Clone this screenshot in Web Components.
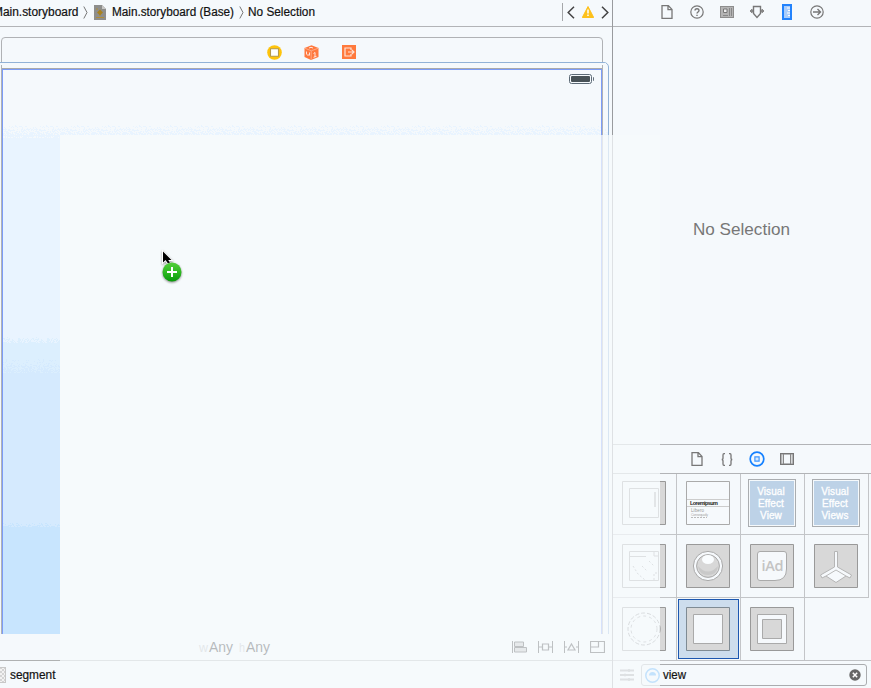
<!DOCTYPE html>
<html lang="en"><head><meta charset="utf-8"><title>Main.storyboard</title>
<style>
body{margin:0;background:#f5f9fc;font:13px "Liberation Sans",Arial,sans-serif;color:#111;overflow:hidden}
</style></head><body>
<xc-window></xc-window>
<script>
function define(name, css, html, after){
  const t=document.createElement('template');
  t.innerHTML='<style>*{box-sizing:border-box}svg{display:block;flex:none;overflow:visible}'+css+'</style>'+html;
  customElements.define(name,class extends HTMLElement{
    constructor(){super();this.attachShadow({mode:'open'}).append(t.content.cloneNode(true));}
    connectedCallback(){if(after)after(this);}
  });
}
const tile='<path d="M.5.5h43v43H.5z" fill="#d8d8d8" stroke="#999"/>';
const ghost='<path d="M38 .5h5.500v43H38z" fill="#d8d8d8"/><path d="M.5.5h43v43H.5z" fill="none" stroke="#999"/>';
const icons={
doc:[12,14,'<path d="M1 .7h6.4l3.6 3.7v8.9H1z M7 .7v4h4" fill="none" stroke="#777" stroke-width="1.3"/>'],
help:[14,14,'<circle cx="7" cy="7" r="6.2" fill="none" stroke="#777" stroke-width="1.2"/><path d="M5 5.6C5 3 9 3.100 9 5.500C9 7 7 7 7 8.600M7 9.700v1.300" fill="none" stroke="#777" stroke-width="1.4"/>'],
identity:[14,12,'<path d="M0 0h14v12H0z" fill="#8d8d8d"/><path d="M1 1h12v10H1z" fill="#b4b4b4"/><path d="M3.500 3h3.500v3.500H3.500z" fill="#eee" stroke="#777"/><path d="M9.500 2v8M11.500 2v8M3 9.500h5" stroke="#888"/>'],
attributes:[14,14,'<path d="M3.500 1.500h7v7L7 12.500 3.500 8.500z" fill="none" stroke="#777" stroke-width="1.400"/><path d="M0 6h3M11 6h3" stroke="#888" stroke-width="2"/><path d="M1.800 4v4M12.200 4v4" stroke="#888" stroke-width="1.500"/>'],
ruler:[10,16,'<path d="M1 1h8v14H1z" fill="#a9cdfb" stroke="#2383fc" stroke-width="2"/><path d="M5 4h3M6 6.500h2M5 9h3M6 11.500h2" stroke="#fff" stroke-width="1.100"/>'],
arrow:[14,14,'<circle cx="7" cy="7" r="6.200" fill="none" stroke="#777" stroke-width="1.200"/><path d="M3 7h7M7.500 4l3 3-3 3" fill="none" stroke="#777" stroke-width="1.400"/>'],
braces:[12,13,'<path d="M4 .7H3Q2 .7 2 2v3Q2 6.500.7 6.500 2 6.500 2 8v3Q2 12.300 3 12.300h1M8 .7h1Q10 .7 10 2v3Q10 6.500 11.300 6.500 10 6.500 10 8v3Q10 12.300 9 12.300H8" fill="none" stroke="#777" stroke-width="1.300"/>'],
object:[16,16,'<circle cx="8" cy="8" r="6.800" fill="none" stroke="#1581ff" stroke-width="1.700"/><path d="M5.900 5.900h4.200v4.200H5.900z" fill="#d5e9ff" stroke="#3f97ff" stroke-width="1.200"/>'],
media:[14,12,'<path d="M.75.75h12.500v10.500H.75z" fill="none" stroke="#777" stroke-width="1.500"/><path d="M3.500 1v10M10.500 1v10" stroke="#888"/><path d="M2 1v10M12 1v10" stroke="#b5b5b5"/>'],
file:[12,15,'<path d="M0 0h8L12 4v11H0z" fill="#8e8e8c"/><path d="M8 0v4H12z" fill="#c9c8c5"/><path d="M2 4h2M2 12.500h8M6 5v6" stroke="#b08d38"/><path d="m6 4.500 3 3-3 3-3-3z" fill="#a98220"/>'],
chev:[5,13,'<path d="m.8.500 3.200 6-3.200 6" fill="none" stroke="#777" stroke-width="1"/>'],
left:[8,13,'<path d="M7 .8 1.200 6.500 7 12.200" fill="none" stroke="#444" stroke-width="1.500"/>'],
right:[8,13,'<path d="m1 .8 5.800 5.700L1 12.200" fill="none" stroke="#444" stroke-width="1.500"/>'],
warn:[12,12,'<path d="M6 .5 11.700 11.500H.3z" fill="#fdc11c" stroke="#fdc11c" stroke-linejoin="round"/><path d="M6 3.500v4M6 8.500v1.500" stroke="#fff" stroke-width="1.500"/>'],
vc:[15,15,'<circle cx="7.500" cy="7.500" r="7.300" fill="#ffc40b"/><path d="M3.500 3.800h8v7.400h-8z" fill="#fff" stroke="#b59a4a" stroke-width="1.100"/>'],
cube:[15,15,'<path d="M7.500.2 14.500 3v9L7 15 .5 12V3z" fill="#ff793e"/><path d="m.8 3.200 6.500 2.600L14.300 3.200M7.200 6v8.500" fill="none" stroke="#ffb593" stroke-width=".8"/><path d="M9.500 8.500 11 7.500v4.500M9.500 12.300l3-1M2.500 6.500v3M4 9v2M5.500 7.500v3M5 3l2-.7 2 .7" fill="none" stroke="#ffe5da" stroke-width="1"/>'],
exit:[14,14,'<path d="M0 0h14v14H0z" fill="#ff7a3d"/><path d="M9 5V3H3v8h6V9M6 7h6M9.800 4.800 12 7 9.800 9.200" fill="none" stroke="#ffe4d8" stroke-width="1.200"/>'],
align:[15,12,'<path d="M.5 0v12" stroke="#222"/><path d="M2.500 1h9v4.500h-9zM2.500 6.500h12v4.500h-12z" fill="#bbb" stroke="#222"/>'],
pin:[15,12,'<path d="M.5 0v12M14.500 0v12M1 6h3M11 6h3" stroke="#222"/><path d="M4.500 3h6v6h-6z" fill="none" stroke="#222" stroke-width="1.200"/>'],
resolve:[15,12,'<path d="M.5 0v12M14.500 0v12M1 6h2M12 6h2" stroke="#222"/><path d="M7.500 3 11 9H4z" fill="none" stroke="#222" stroke-width="1.200"/>'],
resize:[15,12,'<path d="M.5.5h14v11H.5zM.5 6h8V.5" fill="none" stroke="#222" stroke-width="1.200"/>'],
list:[14,12,'<path d="M0 1.500h14M0 6h14M0 10.500h14" stroke="#999" stroke-width="1.800"/><path d="M9 .3v2.500M5 4.800v2.500M9 9.300v2.500" stroke="#999" stroke-width="2"/>'],
clear:[12,12,'<circle cx="6" cy="6" r="5.700" fill="#666"/><path d="m3.800 3.800 4.400 4.400M8.200 3.800 3.800 8.200" stroke="#fff" stroke-width="1.500"/>'],
view:[44,44,'<path d="M.5.5h43v43H.5z" fill="#d8d8d8" stroke="#7f8b94"/><path d="M7.500 7.500h29v29h-29z" fill="#f6f9fc" stroke="#aaa"/>'],
container:[44,44,tile+'<path d="M7.500 7.500h29v29h-29z" fill="#f6f9fc" stroke="#aaa"/><path d="M12.500 12.500h19v19h-19z" fill="#d8d8d8" stroke="#aaa"/>'],
scroll:[44,44,ghost+'<path d="M7.500 7.500h29v29h-29z" fill="none" stroke="#999"/><path d="M33 11v15" stroke="#aaa" stroke-width="2"/>'],
map:[44,44,ghost+'<path d="M7.500 7.500h29v29h-29z" fill="none" stroke="#999"/><path d="M8 12.500h16M32 8v4h5" fill="none" stroke="#999"/><path d="M11 22l5 8 7 6M20 22l5 5M32 36v-7h5M27 17l5 5" fill="none" stroke="#999" stroke-dasharray="2 2"/>'],
orb:[44,44,tile+'<circle cx="22" cy="22" r="13" fill="#d8d8d8" stroke="#f6f9fc" stroke-width="3"/><circle cx="22" cy="22" r="14.600" fill="none" stroke="#aaa"/><circle cx="22" cy="22" r="11.400" fill="none" stroke="#aaa"/><ellipse cx="22" cy="15.500" rx="6" ry="4.500" fill="#fafdff"/><path d="M12 22q10 11 20 0-1 9-10 9t-10-9z" fill="#c9c9c9"/>'],
iad:[44,44,tile+'<path d="M10 7.500h24q2.500 0 2.500 2.500v15q0 11.500-11.500 11.500H10q-2.500 0-2.500-2.500V10q0-2.500 2.500-2.500z" fill="#f6f9fc" stroke="#aaa"/><text x="22.500" y="27" text-anchor="middle" font-family="Open Sans,sans-serif" font-size="14.500" font-weight="600" fill="#c4c4c4" textLength="22">iAd</text>'],
scene:[44,44,tile+'<path d="M20.500 7.500h3v15.500L37.500 31l-1.500 3-4-2-10 6.500L12 32l-4 2-1.500-3 14-8z" fill="#f6f9fc" stroke="#b5b5b5"/><path d="m12 32 10-6 10 6" fill="none" stroke="#bbb"/>'],
spin:[44,44,ghost+'<circle cx="22" cy="22" r="16" fill="none" stroke="#888" stroke-dasharray="4 2"/><circle cx="22" cy="22" r="13" fill="none" stroke="#999" stroke-dasharray="3 3"/>'],
text:[44,44,'<path d="M.5.5h43v43H.5z" fill="#f6f9fc" stroke="#aaa"/><path d="M1 18.500h42M1 25.500h42" stroke="#ccc"/><g font-family="Liberation Sans"><text x="4" y="24" font-size="5.500" font-weight="700" fill="#222" textLength="28">Loremipsum</text><text x="5" y="31" font-size="4.500" fill="#999" textLength="13">Libero</text><text x="5" y="34.600" font-size="3.600" fill="#aaa" textLength="17">Consequatly</text></g><path d="M5 36.500h16" stroke="#bbb" stroke-dasharray="2 1"/>']
};
customElements.define('xc-icon',class extends HTMLElement{
  constructor(){super();this.attachShadow({mode:'open'});}
  connectedCallback(){const i=icons[this.getAttribute('name')];
    this.shadowRoot.innerHTML=`<style>:host{display:block;flex:none;width:${i[0]}px;height:${i[1]}px}svg{display:block}</style><svg width="${i[0]}" height="${i[1]}">${i[2]}</svg>`;}
});
define('xc-text',':host{display:block;white-space:pre;flex:none}','<div></div>',el=>{
  const w=+el.getAttribute('w'),s=+el.getAttribute('size')||12,c=el.getAttribute('color')||'#111';
  const h=Math.ceil(s*1.3);
  el.shadowRoot.querySelector('div').innerHTML=`<svg width="${w}" height="${h}"><text x="0" y="${s}" font-size="${s}" fill="${c}" stroke="${c}" stroke-width="${s<13?.2:0}" textLength="${w}" lengthAdjust="spacingAndGlyphs">${el.textContent}</text></svg>`;
});
define('xc-jumpbar',`:host{display:flex;align-items:center;height:27px;border-bottom:1px solid #b2b4b7;padding-bottom:2px;overflow:hidden}
.crumbs{display:flex;align-items:center;margin-left:-7px;flex:1}.nav{display:flex;align-items:center;border-left:1px solid #a5a7aa;height:18px;padding:0 3px 0 4px;gap:7px}`,
`<div class="crumbs"><xc-text w="85.500">Main.storyboard</xc-text><xc-icon name="chev" style="margin-left:4.500px"></xc-icon><xc-icon name="file" style="margin-left:6px"></xc-icon><xc-text w="122" style="margin-left:6px">Main.storyboard (Base)</xc-text><xc-icon name="chev" style="margin-left:5px"></xc-icon><xc-text w="67" style="margin-left:4px">No Selection</xc-text></div>
<div class="nav"><xc-icon name="left"></xc-icon><xc-icon name="warn"></xc-icon><xc-icon name="right"></xc-icon></div>`);
define('xc-battery',':host{display:flex;align-items:center;width:25px;height:10px}.b{width:23px;height:10px;border:1px solid #5c6a76;border-radius:2.500px;padding:1px}.f{height:6px;background:#485257;border-radius:1px}.n{width:1.500px;height:4px;background:#65717c;border-radius:0 1px 1px 0;margin-left:.5px}','<div class="b"><div class="f"></div></div><div class="n"></div>');
define('xc-canvas',`:host{display:block;position:relative;height:607px;overflow:hidden}
.dock{position:absolute;left:1px;top:10px;width:602px;height:600px;border:1px solid #b0b2b5;border-radius:4px 4px 0 0;display:flex;justify-content:center;gap:22px;padding:7px 0 0 19px}
.halo{position:absolute;left:-5px;top:35px;width:614px;height:590px;border:1px solid #91b2d7;border-radius:0 5px 0 0}
.halo:before{content:"";position:absolute;left:0;right:2px;top:0;height:2px;background:#f5f9fc}
.scene{position:absolute;left:2px;top:41px;width:600px;height:570px;border-top:1px solid #aaa}
.scene:before{content:"";position:absolute;inset:0;border:1px solid #7c9cf8;border-width:1px 1px 0}
.wash{position:absolute;left:3px;top:108px;width:57px;height:499px;background:linear-gradient(#e9f4ff 0 208px,#dceffe 208px 238px,#d5eafe 238px 392px,#c8e5fe 392px)}
xc-battery{position:absolute;left:567px;top:5px}.noise{position:absolute;left:3px;top:0}`,
`<div class="dock"><xc-icon name="vc"></xc-icon><xc-icon name="cube"></xc-icon><xc-icon name="exit" style="margin-left:1px"></xc-icon></div><div class="halo"></div><div class="scene"><xc-battery></xc-battery></div><div class="wash"></div><svg class="noise" width="604" height="607" shape-rendering="crispEdges"></svg>`,el=>{
 let seed=7;const rnd=()=>(seed=(seed*48271)%2147483647)/2147483647;let out='';
 const band=(x0,x1,y0,y1,c,tile)=>{let d='';const cache=[];for(let x=x0;x<x1;x++){const k=x%tile;if(!cache[k]){cache[k]=[];for(let y=y0;y<y1;y++)if(rnd()<.75*(y-y0)/(y1-y0))cache[k].push(y);}for(const y of cache[k])d+=`M${x} ${y}h1v1h-1z`;}out+=`<path fill="${c}" d="${d}"/>`;};
 band(0,598,97,108,'#e9f4ff',31);band(601,605,99,108,'#e9f4ff',31);band(0,57,309,316,'#dceffe',29);band(0,57,331,346,'#d5eafe',37);band(0,57,495,500,'#c8e5fe',29);
 band(0,57,108,111,'#f5f9fc',31);
 el.shadowRoot.querySelector('.noise').innerHTML=out;
});
define('xc-sizebar',':host{display:flex;align-items:center;height:27px;border-bottom:1px solid #afb1b2;padding:0 7px 0 199px}.g{display:flex;gap:11px;margin-left:auto}',
`<xc-text w="9" size="13" color="#b0b2b4">w</xc-text><xc-text w="24" size="14" color="#000" style="margin-left:.5px">Any</xc-text><xc-text w="6" size="13" color="#b0b2b4" style="margin-left:6.500px">h</xc-text><xc-text w="24" size="14" color="#000" style="margin-left:.5px">Any</xc-text><div class="g"><xc-icon name="align"></xc-icon><xc-icon name="pin"></xc-icon><xc-icon name="resolve"></xc-icon><xc-icon name="resize"></xc-icon></div>`);
define('xc-outline-filter',':host{display:flex;align-items:center;height:27px;gap:4px}.i{width:6px;height:16px;border:1px solid #c8c8c8;border-left:0;background:repeating-conic-gradient(#d4d4d4 0 25%,#f2f2f2 0 50%) 0/4px 4px}','<div class="i"></div><xc-text w="45.500">segment</xc-text>');
define('xc-tabs',':host{display:flex;align-items:center;justify-content:center;border-bottom:1px solid #b2b4b7}','<slot></slot>');
define('xc-tab',':host{display:flex;width:30px;height:20px;align-items:center;justify-content:center}','<slot></slot>');
define('xc-cell',`:host{display:block;box-sizing:border-box;padding:9px 0 0 9px;border-right:1px solid #c3c5c8;border-bottom:1px solid #c3c5c8;position:relative}
:host([selected]){background:#cddded;box-shadow:inset 0 0 0 1px #f5f9fc}:host([selected]):before{content:"";position:absolute;inset:1px;border:1px solid #1c57b0}:host([open]){border-right-color:transparent}`,'<slot></slot>');
define('xc-effect',':host{display:block;box-sizing:border-box;width:48px;height:48px;margin:-2px;border:1px solid #aaadb0;padding:1px}div{background:#bdd2e7;height:44px;display:flex;flex-direction:column;align-items:center;padding:5px 2px 0 0;font:10px/12px "Liberation Sans";color:#fff;letter-spacing:.1px;-webkit-text-stroke:.3px #fff}','<div><span>Visual</span><span>Effect</span><slot></slot></div>');
define('xc-library',':host{box-sizing:border-box;display:grid;grid-template-columns:repeat(4,64px);grid-template-rows:63px 63px 62px;height:187px;overflow:hidden;align-content:end;border-bottom:1px solid #c0c2c5;width:258px}xc-cell:nth-last-child(-n+4){border-bottom:0}',
`<xc-cell><xc-icon name="scroll"></xc-icon></xc-cell><xc-cell><xc-icon name="text"></xc-icon></xc-cell><xc-cell><xc-effect>View</xc-effect></xc-cell><xc-cell><xc-effect>Views</xc-effect></xc-cell>
<xc-cell><xc-icon name="map"></xc-icon></xc-cell><xc-cell><xc-icon name="orb"></xc-icon></xc-cell><xc-cell><xc-icon name="iad"></xc-icon></xc-cell><xc-cell><xc-icon name="scene"></xc-icon></xc-cell>
<xc-cell><xc-icon name="spin"></xc-icon></xc-cell><xc-cell selected><xc-icon name="view"></xc-icon></xc-cell><xc-cell><xc-icon name="container"></xc-icon></xc-cell><xc-cell open></xc-cell>`);
define('xc-library-filter',':host{display:flex;align-items:center;height:27px;padding:0 4px 0 7px;gap:7px}.f{flex:1;height:22px;border:1px solid #aaacaf;border-radius:3px;display:flex;align-items:center;padding:0 5px 0 21px}',
'<xc-icon name="list"></xc-icon><div class="f"><xc-text w="23">view</xc-text><xc-icon name="clear" style="margin-left:auto"></xc-icon></div>');
define('xc-inspector',':host{display:flex;flex-direction:column;width:258px}.e{height:418px;border-bottom:1px solid #b2b4b7;display:flex;justify-content:center;padding:191px 1px 0 0}',
`<xc-tabs style="box-sizing:border-box;height:27px;padding:0 0 2px"><xc-tab><xc-icon name="doc"></xc-icon></xc-tab><xc-tab><xc-icon name="help"></xc-icon></xc-tab><xc-tab><xc-icon name="identity"></xc-icon></xc-tab><xc-tab><xc-icon name="attributes"></xc-icon></xc-tab><xc-tab><xc-icon name="ruler"></xc-icon></xc-tab><xc-tab><xc-icon name="arrow"></xc-icon></xc-tab></xc-tabs>
<div class="e"><xc-text w="97" size="17" color="#777">No Selection</xc-text></div>
<xc-tabs style="box-sizing:border-box;height:29px"><xc-tab><xc-icon name="doc"></xc-icon></xc-tab><xc-tab><xc-icon name="braces"></xc-icon></xc-tab><xc-tab><xc-icon name="object"></xc-icon></xc-tab><xc-tab><xc-icon name="media"></xc-icon></xc-tab></xc-tabs>
<xc-library></xc-library><xc-library-filter></xc-library-filter>`);
define('xc-drag',`:host{display:block;position:absolute;left:60px;top:135px;width:600px;height:553px;background:rgba(245,249,252,.74)}
.c{position:absolute;left:101px;top:113px}`,
`<svg class="c" width="24" height="36"><defs><linearGradient id="g" x2="0" y2="1"><stop stop-color="#55cf3b"/><stop offset=".5" stop-color="#2fb922"/><stop offset="1" stop-color="#079a0a"/></linearGradient></defs><path d="M1 1.500v15l3.500-3 3 5 3-1.500-2-4h4z" fill="#fff" filter="drop-shadow(0 1px 1px #999)"/><path d="M2 3.500v11l2.500-2.500L7 15.500l2-1L7.200 12h3.300z" fill="#000"/><circle cx="11" cy="24" r="9.500" fill="url(#g)" filter="drop-shadow(0 1px 1px #888)"/><path d="M11 19v10M6 24h10" stroke="#fff" stroke-width="2"/></svg>`);
define('xc-window',`:host{display:grid;grid-template-columns:613px 258px;width:871px;height:688px;position:relative;overflow:hidden}
.editor{border-right:1px solid #999b9e;min-width:0;overflow:hidden}.o{position:absolute;left:645px;top:668px}`,
`<div class="editor"><xc-jumpbar style="box-sizing:border-box"></xc-jumpbar><xc-canvas></xc-canvas><xc-sizebar style="box-sizing:border-box"></xc-sizebar><xc-outline-filter></xc-outline-filter></div><xc-inspector></xc-inspector><xc-drag></xc-drag>
<svg class="o" width="15" height="15"><circle cx="7.500" cy="7.500" r="6.700" fill="#f5f9fc" stroke="#c3e2fc" stroke-width="1.500"/><path d="M4 7.500q0-3.500 3.500-3.500T11 7.500z" fill="#c3e2fc"/></svg>`);
</script></body></html>
